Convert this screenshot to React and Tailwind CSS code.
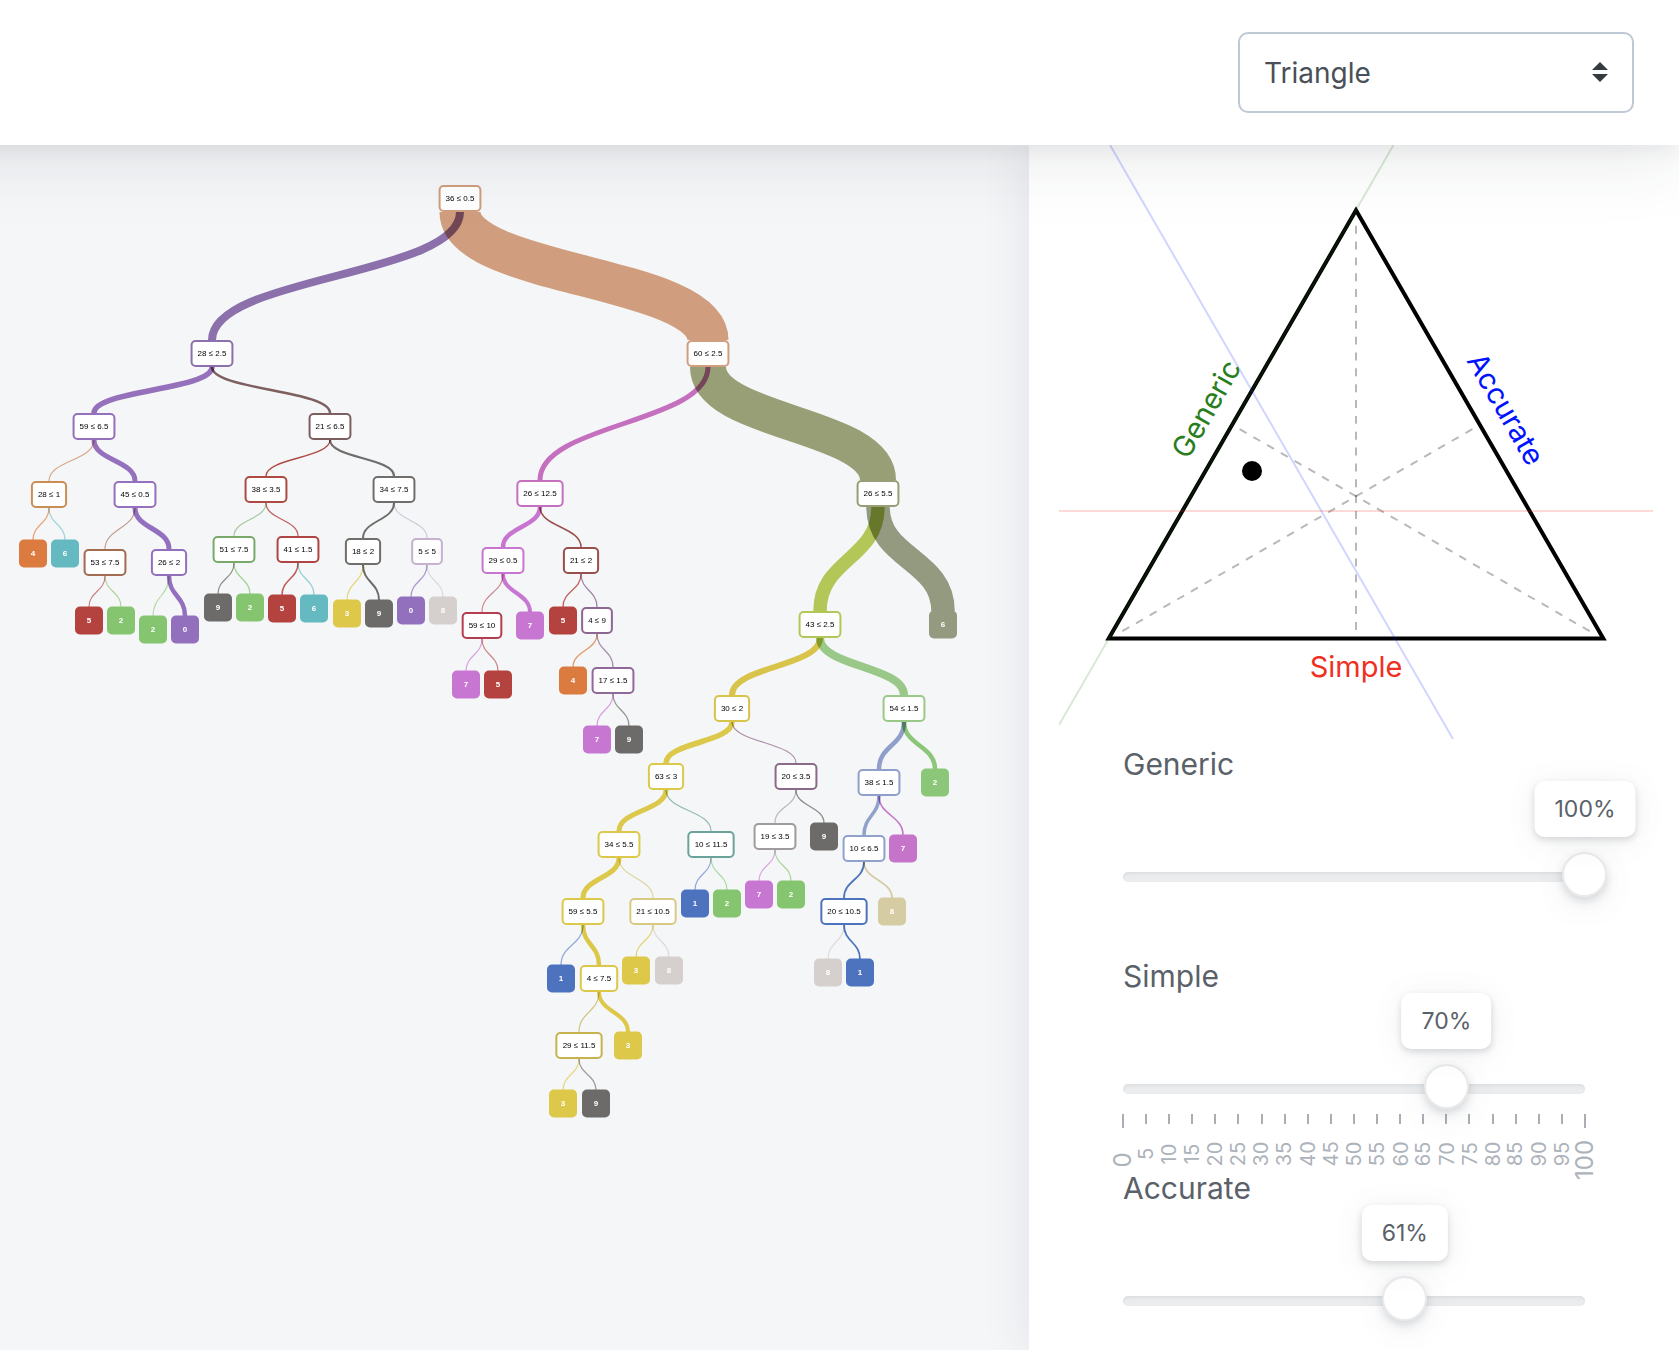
import { useState } from 'react';

const NODE_H = 27;
const LEAF = 28;

// [id, parent, label, x, y, color, link width, link color]
const NODES = [
  ['a', null, '36 ≤ 0.5', 460, 198, '#d09e7e'],
  ['b', 'a', '28 ≤ 2.5', 212, 353, '#8b70ab', 8],
  ['c', 'a', '60 ≤ 2.5', 708, 353, '#d09e7e', 41],
  ['ba', 'b', '59 ≤ 6.5', 94, 426, '#9570bb', 5.5],
  ['bb', 'b', '21 ≤ 6.5', 330, 426, '#7d5f60', 2.5],
  ['baa', 'ba', '28 ≤ 1', 49, 494, '#c98d55', 1.2, '#d9a988'],
  ['bab', 'ba', '45 ≤ 0.5', 135, 494, '#9470bd', 5],
  ['bba', 'bb', '38 ≤ 3.5', 266, 489, '#ad4a41', 1.3],
  ['bbb', 'bb', '34 ≤ 7.5', 394, 489, '#6f6e6d', 2.2],
  ['baaa', 'baa', '4', 33, 553, '#dc7b40', 1.3, '#e9a27b'],
  ['baab', 'baa', '6', 65, 553, '#65b9c1', 1.3, '#9fd4d9'],
  ['baba', 'bab', '53 ≤ 7.5', 105, 562, '#a26b52', 1.1, '#c09c8c'],
  ['babb', 'bab', '26 ≤ 2', 169, 562, '#9370be', 5],
  ['babaa', 'baba', '5', 89, 620, '#b4423f', 1.1, '#cb7d7b'],
  ['babab', 'baba', '2', 121, 620, '#86c570', 1.1, '#a8d598'],
  ['babba', 'babb', '2', 153, 629, '#86c570', 1.2, '#b4dba6'],
  ['babbb', 'babb', '0', 185, 629, '#9370be', 4.5],
  ['bbaa', 'bba', '51 ≤ 7.5', 234, 549, '#7aaa6b', 1.2, '#a9c8a0'],
  ['bbab', 'bba', '41 ≤ 1.5', 298, 549, '#b04644', 1.3, '#bf6563'],
  ['bbaaa', 'bbaa', '9', 218, 607, '#6c6b69', 1.2, '#8f8e8d'],
  ['bbaab', 'bbaa', '2', 250, 607, '#86c570', 1.3, '#a3d393'],
  ['bbaba', 'bbab', '5', 282, 608, '#b4423f', 1.5, '#bd5c59'],
  ['bbabb', 'bbab', '6', 314, 608, '#65b9c1', 1.3, '#93ced4'],
  ['bbba', 'bbb', '18 ≤ 2', 363, 551, '#6f6e6a', 2],
  ['bbbb', 'bbb', '5 ≤ 5', 427, 551, '#c4b2ce', 1.2, '#d2c7d9'],
  ['bbbaa', 'bbba', '3', 347, 613, '#ddc84a', 1.2, '#e4d67b'],
  ['bbbab', 'bbba', '9', 379, 613, '#6c6b69', 2],
  ['bbbba', 'bbbb', '0', 411, 610, '#9370be', 1.3, '#ae94cf'],
  ['bbbbb', 'bbbb', '8', 443, 610, '#d5cfcd', 1.2, '#ddd9d8'],

  ['ca', 'c', '26 ≤ 12.5', 540, 493, '#c56fbf', 5],
  ['cb', 'c', '26 ≤ 5.5', 878, 493, '#989f76', 36],
  ['caa', 'ca', '29 ≤ 0.5', 503, 560, '#c775cf', 4.5],
  ['cab', 'ca', '21 ≤ 2', 581, 560, '#98504e', 1.5],
  ['caaa', 'caa', '59 ≤ 10', 482, 625, '#b53d50', 1.2, '#cf8791'],
  ['caab', 'caa', '7', 530, 625, '#c776d1', 4],
  ['caaaa', 'caaa', '7', 466, 684, '#c776d1', 1.2, '#d8a2de'],
  ['caaab', 'caaa', '5', 498, 684, '#b4423f', 1.2, '#cc8280'],
  ['caba', 'cab', '5', 563, 620, '#b4423f', 1.3, '#c2625f'],
  ['cabb', 'cab', '4 ≤ 9', 597, 620, '#8d6691', 1.3, '#a284a6'],
  ['cabba', 'cabb', '4', 573, 680, '#dc7b40', 1.3, '#e4996c'],
  ['cabbb', 'cabb', '17 ≤ 1.5', 613, 680, '#90699a', 1.3, '#aa8bad'],
  ['cabbba', 'cabbb', '7', 597, 739, '#c776d1', 1.3, '#d8a0df'],
  ['cabbbb', 'cabbb', '9', 629, 739, '#6c6b69', 1.3, '#969594'],
  ['cba', 'cb', '43 ≤ 2.5', 820, 624, '#b3c658', 13.5],
  ['cbb', 'cb', '6', 943, 624, '#939a80', 23.5],
  ['cbaa', 'cba', '30 ≤ 2', 732, 708, '#d8c44a', 6],
  ['cbab', 'cba', '54 ≤ 1.5', 904, 708, '#99c888', 8],
  ['d', 'cbaa', '63 ≤ 3', 666, 776, '#dcc84b', 5.5],
  ['e', 'cbaa', '20 ≤ 3.5', 796, 776, '#896a89', 1.2, '#a991a9'],
  ['da', 'd', '34 ≤ 5.5', 619, 844, '#dcc84a', 5],
  ['db', 'd', '10 ≤ 11.5', 711, 844, '#6ba39a', 1.2, '#93bbb4'],
  ['daa', 'da', '59 ≤ 5.5', 583, 911, '#dcc84a', 5],
  ['dab', 'da', '21 ≤ 10.5', 653, 911, '#d8ca82', 1.2, '#dfd59c'],
  ['dba', 'db', '1', 695, 903, '#4d73bf', 1.2, '#8fa7d8'],
  ['dbb', 'db', '2', 727, 903, '#86c570', 1.2, '#afd9a1'],
  ['daaa', 'daa', '1', 561, 978, '#4d73bf', 1.2, '#8fa7d8'],
  ['daab', 'daa', '4 ≤ 7.5', 599, 978, '#dcc848', 4.5],
  ['daba', 'dab', '3', 636, 970, '#ddc84a', 1.3, '#e3d475'],
  ['dabb', 'dab', '8', 669, 970, '#d5cfcd', 1.2, '#ddd9d8'],
  ['daaba', 'daab', '29 ≤ 11.5', 579, 1045, '#c6b34d', 1.2, '#d2c682'],
  ['daabb', 'daab', '3', 628, 1045, '#ddc84a', 4],
  ['f', 'daaba', '3', 563, 1103, '#ddc84a', 1.3, '#e5d986'],
  ['g', 'daaba', '9', 596, 1103, '#6c6b69', 1.2, '#9a9998'],
  ['ea', 'e', '19 ≤ 3.5', 775, 836, '#9f9a9d', 1.2, '#bbb8ba'],
  ['eb', 'e', '9', 824, 836, '#6c6b69', 1.3, '#8d8c8b'],
  ['eaa', 'ea', '7', 759, 894, '#c776d1', 1.2, '#dba7e1'],
  ['eab', 'ea', '2', 791, 894, '#86c570', 1.2, '#a8d598'],
  ['h', 'cbab', '38 ≤ 1.5', 879, 782, '#909fc9', 4.5],
  ['i', 'cbab', '2', 935, 782, '#8cc779', 4.5],
  ['ha', 'h', '10 ≤ 6.5', 864, 848, '#90a1cb', 3.5],
  ['hb', 'h', '7', 903, 848, '#c674ca', 1.6],
  ['haa', 'ha', '20 ≤ 10.5', 844, 911, '#4d73bd', 1.8],
  ['hab', 'ha', '8', 892, 911, '#d6cca4', 1.8],
  ['haaa', 'haa', '8', 828, 972, '#d5cfcd', 1.2, '#dfdbdb'],
  ['haab', 'haa', '1', 860, 972, '#4d73bf', 1.8],
].map(([id, parent, label, x, y, color, width, linkColor]) => ({
  id,
  parent,
  label,
  x,
  y,
  color,
  width,
  linkColor: linkColor || color,
  leaf: label.length === 1,
}));

const byId = Object.fromEntries(NODES.map((n) => [n.id, n]));

// Splits get as wide as their text: digits and signs take 4.45, dots and spaces half
const nodeWidth = (label) =>
  [...label].reduce((sum, ch) => sum + (ch === '.' || ch === ' ' ? 2.2 : 4.45), 12);

const Link = ({ node }) => {
  const parent = byId[node.parent];
  const y0 = parent.y + 14;
  const y1 = node.y - 13;
  const mid = (y0 + y1) / 2;

  return (
    <path
      d={`M${parent.x} ${y0}C${parent.x} ${mid} ${node.x} ${mid} ${node.x} ${y1}`}
      fill="none"
      stroke={node.linkColor}
      strokeWidth={node.width}
      className="mix-blend-multiply"
    />
  );
};

const Node = ({ node }) => {
  const w = node.leaf ? LEAF - 2 : nodeWidth(node.label);
  const h = node.leaf ? LEAF - 2 : NODE_H - 2;

  return (
    <g>
      <rect
        x={node.x - w / 2}
        y={node.y + 0.5 - h / 2}
        width={w}
        height={h}
        rx="4"
        fill={node.leaf ? node.color : '#fff'}
        stroke={node.color}
        strokeWidth="2"
      />
      <text
        x={node.x}
        y={node.y + 3}
        textAnchor="middle"
        className={node.leaf ? 'fill-white text-[8px] font-bold' : 'fill-black text-[8px]'}
      >
        {node.label}
      </text>
    </g>
  );
};

const Tree = () => (
  <svg viewBox="0 145 1029 1205" className="block w-full isolate font-['Liberation_Sans',sans-serif]">
    {NODES.filter((n) => n.parent).map((n) => (
      <Link key={n.id} node={n} />
    ))}
    {NODES.map((n) => (
      <Node key={n.id} node={n} />
    ))}
  </svg>
);

const Triangle = () => (
  <svg viewBox="0 0 594 594" className="block w-full text-[29px]">
    <g stroke="#000" strokeOpacity="0.28" strokeWidth="2" strokeDasharray="7.95 7.9">
      <path d="M297 80.7V485" />
      <path d="M63.3 486.2L413.5 284" />
      <path d="M530.7 486.2L180.5 284" />
    </g>
    <path d="M297 65.3L544.3 493.6H49.7Z" fill="none" stroke="#000" strokeWidth="4" />
    <g strokeWidth="2" strokeOpacity="0.18">
      <path d="M0 366H594" stroke="#f03020" />
      <path d="M51 0L394 594" stroke="#0018ff" />
      <path d="M334.5 0L0 580" stroke="#2a8020" />
    </g>
    <circle cx="193" cy="326" r="10" />
    <text x="297" y="532" textAnchor="middle" fill="#f0301f">
      Simple
    </text>
    <text transform="translate(156 269) rotate(-60)" textAnchor="middle" fill="#2a7d1c">
      Generic
    </text>
    <text transform="translate(438 269) rotate(60)" textAnchor="middle" fill="#0012ff">
      Accurate
    </text>
  </svg>
);

const Pips = () => (
  <div className="absolute inset-x-0 top-full mt-5 flex justify-between" aria-hidden="true">
    {Array.from({ length: 21 }, (_, i) => i * 5).map((value) => {
      const large = value % 100 === 0;
      return (
        <div key={value} className="flex w-0 flex-col items-center">
          <span className={large ? 'h-3.5 w-0.5 bg-[#a9aeb5]' : 'h-2.5 w-0.5 bg-[#a9aeb5]'} />
          <span className={large ? 'mt-3 flex h-10 items-center' : 'mt-2.5 flex h-10 items-center'}>
            <span
              className={
                large
                  ? '-rotate-90 text-2xl leading-none text-[#adb3bb]'
                  : '-rotate-90 text-xl leading-none text-[#adb3bb]'
              }
            >
              {value}
            </span>
          </span>
        </div>
      );
    })}
  </div>
);

const Slider = ({ id, label, initial, pips }) => {
  const [value, setValue] = useState(initial);

  return (
    <div>
      <label htmlFor={id} className="block text-[30px] leading-[50px]">
        {label}
      </label>
      <div className="relative mt-[83px]">
        <div className="h-2.5 rounded-full bg-[#ebecee] shadow-[inset_0_2px_3px_#dcdfe1]" />
        {pips && <Pips />}
        <input
          id={id}
          type="range"
          min="0"
          max="100"
          value={value}
          onChange={(e) => setValue(Number(e.target.value))}
          className="absolute -inset-x-[22px] -top-5 h-[45px] cursor-pointer appearance-none bg-transparent [&::-webkit-slider-thumb]:size-[45px] [&::-webkit-slider-thumb]:appearance-none [&::-webkit-slider-thumb]:rounded-full [&::-webkit-slider-thumb]:border-2 [&::-webkit-slider-thumb]:border-[#e9eaec] [&::-webkit-slider-thumb]:bg-white [&::-webkit-slider-thumb]:shadow-[0_4px_8px_rgba(90,97,105,0.2),0_8px_30px_rgba(90,97,105,0.1)]"
        />
        <output
          htmlFor={id}
          style={{ left: `${value}%` }}
          className="absolute bottom-[45px] -translate-x-1/2 rounded-[10px] bg-white px-5 text-[23px] leading-[56px] shadow-[0_3px_6px_rgba(90,97,105,0.2),0_4px_30px_rgba(90,97,105,0.1)]"
        >
          {value}%
        </output>
      </div>
    </div>
  );
};

const App = () => (
  <div className="flex min-h-screen flex-col overflow-hidden bg-white font-['Inter',sans-serif] text-[#5a6169]">
    <header className="relative z-10 -ml-20 flex justify-end bg-white py-8 pr-[45px] shadow-[0_6px_16px_rgba(50,55,65,0.06),0_16px_70px_rgba(40,45,60,0.1)]">
      <div className="relative w-[396px]">
        <select
          aria-label="View"
          defaultValue="Triangle"
          className="h-[81px] w-full appearance-none rounded-[10px] border-2 border-[#bfc9d5] bg-white px-6 text-[28px] text-[#495057]"
        >
          <option>Triangle</option>
          <option>Sliders</option>
        </select>
        <svg
          viewBox="0 0 16 20"
          className="pointer-events-none absolute top-[30px] right-[26px] h-5 w-4"
          fill="#343a40"
        >
          <path d="M8 0l8 8H0zM8 20l8-8H0z" />
        </svg>
      </div>
    </header>

    <main className="flex flex-1">
      <section className="min-w-0 flex-1 bg-[#f5f6f8]">
        <Tree />
      </section>
      <aside className="w-[650px] shrink-0 bg-white shadow-[0_0_46px_rgba(40,45,70,0.1)]">
        <div className="pr-[26px] pl-[30px]">
          <Triangle />
        </div>
        <div className="flex flex-col gap-[69px] px-[94px]">
          <Slider id="generic" label="Generic" initial={100} />
          <Slider id="simple" label="Simple" initial={70} pips />
          <Slider id="accurate" label="Accurate" initial={61} />
        </div>
      </aside>
    </main>
  </div>
);

export default App;
